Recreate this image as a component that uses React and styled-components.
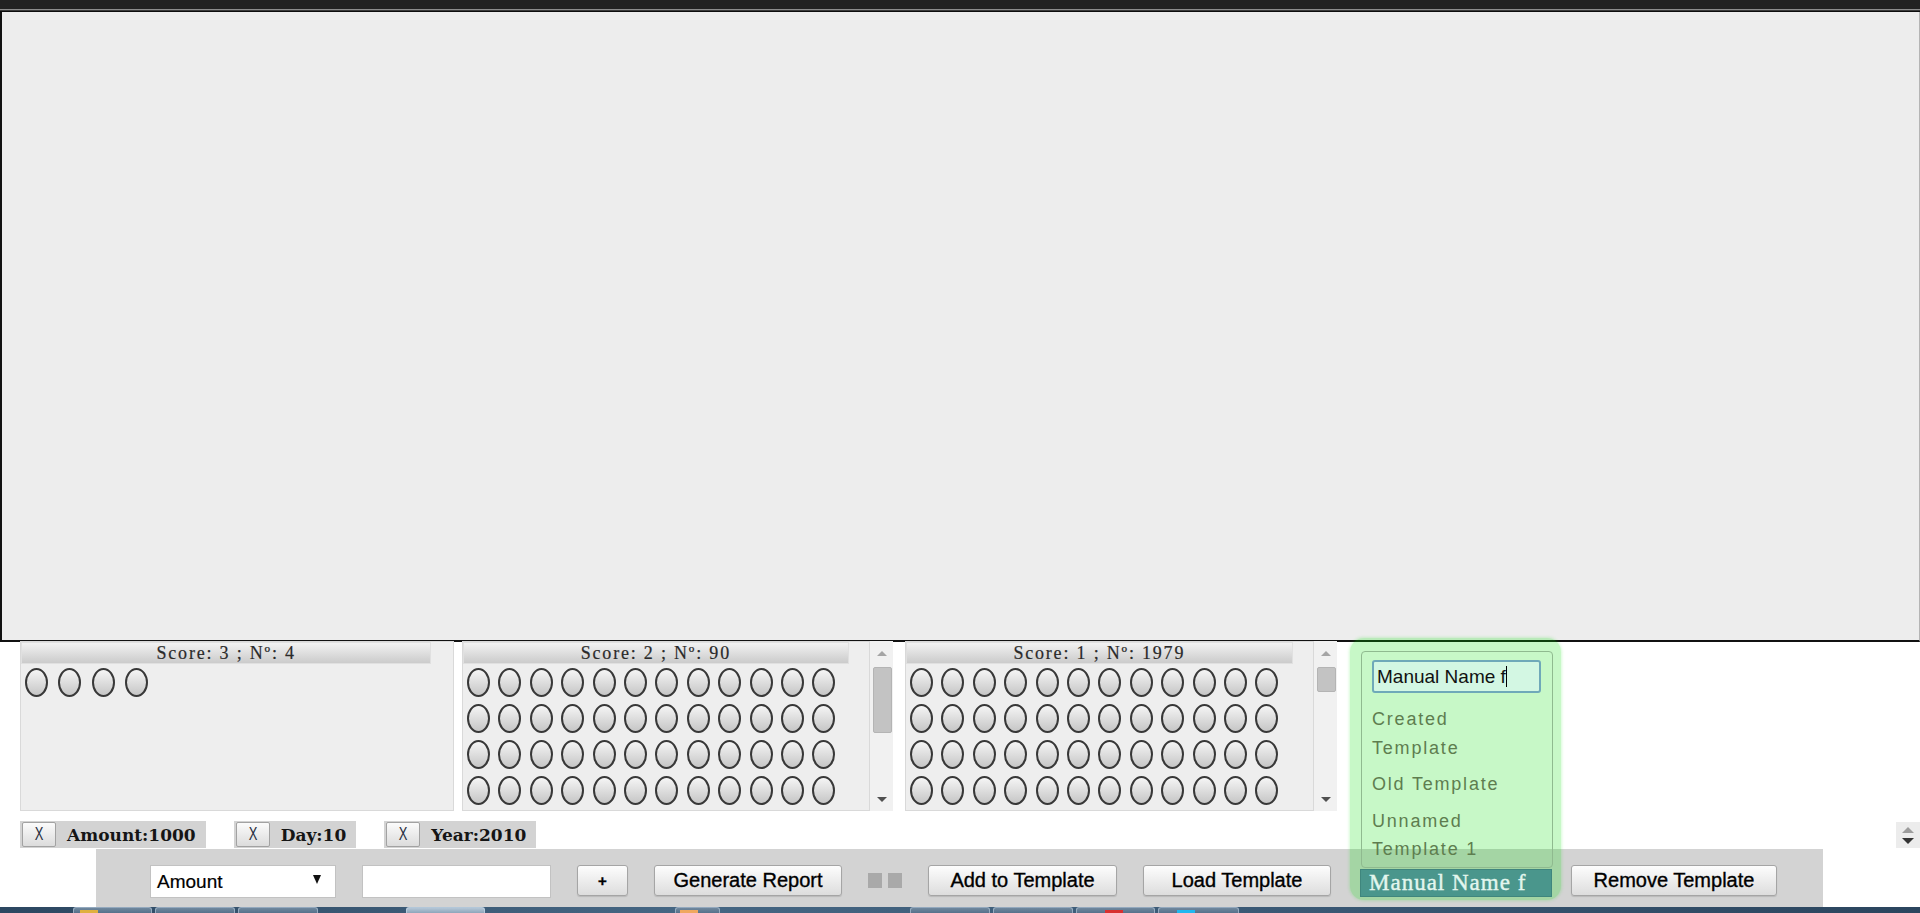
import React from 'react';
import styled, { createGlobalStyle } from 'styled-components';

const GlobalStyle = createGlobalStyle`
  html, body {
    margin: 0;
    padding: 0;
    background: #fff;
    overflow: hidden;
  }
  body {
    font-family: "Liberation Sans", Arial, sans-serif;
  }
  * {
    box-sizing: border-box;
  }
`;

const Page = styled.div`
  width: 1920px;
  height: 913px;
  display: flex;
  flex-direction: column;
  overflow: hidden;
`;

const TopStrip = styled.div`
  flex: none;
  height: 12px;
  background: linear-gradient(#222 0 9px, #8c8c8c 9px 10px, #3a3a3a 10px 11px, #0d0d0d 11px 12px);
`;

const Canvas = styled.div`
  flex: none;
  height: 630px;
  background: #ededed;
  border-left: 2px solid #111;
  border-right: 1px solid #b5b5b5;
  border-bottom: 2px solid #111;
`;

const PanelsRow = styled.div`
  flex: none;
  display: flex;
  align-items: flex-start;
  height: 170px;
  margin-top: -1px;
  padding-left: 20px;
`;

const PanelBox = styled.div`
  display: flex;
  width: ${p => p.$width}px;
  height: 170px;
  margin-right: ${p => p.$gap}px;
`;

const PanelBody = styled.div`
  flex: 1;
  height: 100%;
  background: #eee;
  border: 1px solid #d9d9d9;
  overflow: hidden;
`;

const PanelHeader = styled.div`
  width: 95%;
  height: 22px;
  background: linear-gradient(#f2f2f2, #cbcbcb);
  border: 1px solid #e0e0e0;
  text-align: center;
  font: 18px/20px "Liberation Serif", "Times New Roman", serif;
  letter-spacing: 1.8px;
  color: #2a2a2a;
  -webkit-text-stroke: 0.2px #2a2a2a;
`;

const Ovals = styled.div`
  width: 95%;
  display: flex;
  flex-wrap: wrap;
  column-gap: ${p => p.$gap}px;
  row-gap: 7px;
  padding: 4px 0 0 4px;
`;

const Oval = styled.span`
  flex: none;
  width: 23px;
  height: 29px;
  border-radius: 50%;
  border: 2px solid #383838;
  background: linear-gradient(#f5f5f5, #c6c6c6);
`;

const ScrollBar = styled.div`
  flex: none;
  width: 23px;
  height: 100%;
  background: #f1f1f1;
  display: flex;
  flex-direction: column;
`;

const ScrollArrow = styled.div`
  height: 24px;
  display: flex;
  align-items: center;
  justify-content: center;
  &::before {
    content: "";
    border-left: 5px solid transparent;
    border-right: 5px solid transparent;
    ${p => p.$up
      ? 'border-bottom: 5px solid #a5a5a5;'
      : 'border-top: 5px solid #505050;'}
  }
`;

const ScrollTrack = styled.div`
  flex: 1;
  padding: 2px 1px 0 3px;
`;

const Thumb = styled.div`
  width: 19px;
  background: #c3c3c3;
  border: 1px solid #b4b4b4;
  border-radius: 2px;
`;

const TagsRow = styled.div`
  flex: none;
  display: flex;
  align-items: flex-start;
  gap: 28px;
  height: 27px;
  margin-top: 10px;
  padding-left: 20px;
`;

const Tag = styled.div`
  display: flex;
  align-items: center;
  gap: 11px;
  height: 27px;
  padding: 0 10px 0 2px;
  background: #d3d3d3;
  font: bold 17px "DejaVu Serif", "Liberation Serif", serif;
  color: #151515;
`;

const RemoveX = styled.button`
  width: 34px;
  height: 25px;
  padding: 0;
  border: 1px solid #a2a2a2;
  border-radius: 2px;
  background: linear-gradient(#fbfbfb, #dcdcdc);
  font: 18px/23px "Liberation Sans", Arial, sans-serif;
  color: #262d40;
  span {
    display: inline-block;
    transform: scaleX(0.72);
  }
`;

const Spinner = styled.div`
  margin-left: auto;
  width: 24px;
  height: 26px;
  margin-top: 1px;
  background: #ececec;
  display: flex;
  flex-direction: column;
  align-items: center;
  justify-content: center;
  gap: 5px;
`;

const Tri = styled.span`
  width: 0;
  height: 0;
  border-left: 6px solid transparent;
  border-right: 6px solid transparent;
  ${p => p.$up
    ? 'border-bottom: 6px solid #9c9c9c;'
    : 'border-top: 6px solid #333;'}
`;

const Toolbar = styled.div`
  flex: none;
  display: flex;
  align-items: flex-start;
  gap: 26px;
  width: 1727px;
  height: 58px;
  margin: 1px 0 0 96px;
  padding: 16px 0 0 54px;
  background: #d3d3d3;
`;

const SelectBox = styled.div`
  display: flex;
  align-items: center;
  justify-content: space-between;
  width: 186px;
  height: 33px;
  padding: 0 14px 0 6px;
  background: #fff;
  border: 1px solid #c2c2c2;
  font: 19px "Liberation Sans", Arial, sans-serif;
  color: #000;
  -webkit-text-stroke: 0.2px #000;
  &::after {
    content: "";
    border-left: 4px solid transparent;
    border-right: 4px solid transparent;
    border-top: 9px solid #111;
    margin-top: -4px;
  }
`;

const TextInput = styled.input`
  width: 189px;
  height: 33px;
  background: #fff;
  border: 1px solid #c2c2c2;
  outline: none;
`;

const Button = styled.button`
  width: ${p => p.$w}px;
  height: 31px;
  padding: 0;
  background: linear-gradient(#fdfdfd, #dddddd);
  border: 1px solid #a5a5a5;
  border-radius: 3px;
  box-shadow: 0 1px 1px rgba(0, 0, 0, 0.12);
  font: ${p => (p.$small ? 'bold 15px' : '20px')} "Liberation Sans", Arial, sans-serif;
  color: #000;
  -webkit-text-stroke: 0.35px #000;
`;

const Marks = styled.div`
  display: flex;
  gap: 6px;
  margin-top: 8px;
`;

const Mark = styled.span`
  width: 14px;
  height: 15px;
  background: #a9a9a9;
`;

const Picker = styled.div`
  position: relative;
  width: 192px;
  height: 28px;
  margin: 4px -7px 0 3px;
`;

const Glow = styled.div`
  position: absolute;
  top: -231px;
  left: -10px;
  right: -9px;
  bottom: -3px;
  border-radius: 14px;
  background: rgba(0, 225, 0, 0.22);
  box-shadow: 0 0 3px 1px rgba(0, 225, 0, 0.16);
`;

const ListBox = styled.div`
  position: absolute;
  left: 1px;
  bottom: calc(100% + 1px);
  width: 192px;
  height: 217px;
  padding: 8px 0 0 10px;
  border: 1px solid #8fba8f;
  border-radius: 4px;
`;

const NameField = styled.div`
  display: flex;
  align-items: center;
  width: 169px;
  height: 33px;
  padding: 0 3px;
  background: #d3f7e3;
  border: 2px solid #6fa9b9;
  border-radius: 3px;
  font: 19px "Liberation Sans", Arial, sans-serif;
  color: #111;
  white-space: pre;
`;

const Caret = styled.span`
  width: 1px;
  height: 21px;
  background: #000;
`;

const Options = styled.div`
  margin-top: 12px;
  display: flex;
  flex-direction: column;
  gap: 8px;
`;

const Option = styled.div`
  width: 150px;
  font: 18px/28.5px "Liberation Sans", Arial, sans-serif;
  letter-spacing: 1.8px;
  color: #5e7d4f;
`;

const SelectedValue = styled.div`
  position: relative;
  height: 28px;
  padding-left: 8px;
  background: #4a968c;
  border: 1px solid #3f867d;
  font: 23px/26px "Liberation Serif", "Times New Roman", serif;
  letter-spacing: 1px;
  color: #e2f6ee;
  -webkit-text-stroke: 0.4px #e2f6ee;
  white-space: nowrap;
  overflow: hidden;
`;

const Taskbar = styled.div`
  flex: none;
  display: flex;
  align-items: stretch;
  gap: 3px;
  height: 6px;
  padding-left: 73px;
  background: linear-gradient(90deg, #2c4761, #456683 35%, #395773 70%, #2b455e);
`;

const TaskItem = styled.div`
  position: relative;
  width: ${p => p.$w}px;
  margin-left: ${p => p.$ml || 0}px;
  background: ${p => (p.$active
    ? 'linear-gradient(#b4c6d6, #8ea6bb)'
    : 'linear-gradient(#70889e, #56718b)')};
  border: 1px solid rgba(220, 235, 250, 0.45);
  border-bottom: none;
  border-radius: 3px 3px 0 0;
  &::after {
    content: "";
    position: absolute;
    left: ${p => p.$iconAt || 22}px;
    top: 2px;
    width: 18px;
    height: 4px;
    background: ${p => p.$icon || 'transparent'};
  }
`;

const ScorePanel = ({ score, count, width, gap, ovalGap, scroll }) => {
  const rows = Math.ceil(count / 12);
  const thumb = Math.max(25, Math.round((122 * 4.3) / rows));
  return (
    <PanelBox $width={width} $gap={gap}>
      <PanelBody>
        <PanelHeader>Score: {score} ; Nº: {count}</PanelHeader>
        <Ovals $gap={ovalGap}>
          {Array.from({ length: count }, (_, i) => <Oval key={i} />)}
        </Ovals>
      </PanelBody>
      {scroll && (
        <ScrollBar>
          <ScrollArrow $up />
          <ScrollTrack>
            <Thumb style={{ height: thumb }} />
          </ScrollTrack>
          <ScrollArrow />
        </ScrollBar>
      )}
    </PanelBox>
  );
};

const panels = [
  { score: 3, count: 4, width: 434, gap: 8, ovalGap: 10.3, scroll: false },
  { score: 2, count: 90, width: 431, gap: 12, ovalGap: 8.4, scroll: true },
  { score: 1, count: 1979, width: 432, gap: 0, ovalGap: 8.4, scroll: true },
];

const filters = ['Amount:1000', 'Day:10', 'Year:2010'];

const templates = ['Created Template', 'Old Template', 'Unnamed Template 1'];

const App = () => (
  <>
    <GlobalStyle />
    <Page>
      <TopStrip />
      <Canvas />
      <PanelsRow>
        {panels.map(p => <ScorePanel key={p.score} {...p} />)}
      </PanelsRow>
      <TagsRow>
        {filters.map(f => (
          <Tag key={f}>
            <RemoveX><span>X</span></RemoveX>
            {f}
          </Tag>
        ))}
        <Spinner>
          <Tri $up />
          <Tri />
        </Spinner>
      </TagsRow>
      <Toolbar>
        <SelectBox>Amount</SelectBox>
        <TextInput />
        <Button $w={51} $small>+</Button>
        <Button $w={188}>Generate Report</Button>
        <Marks>
          <Mark />
          <Mark />
        </Marks>
        <Button $w={189}>Add to Template</Button>
        <Button $w={188}>Load Template</Button>
        <Picker>
          <Glow />
          <ListBox>
            <NameField>
              Manual Name f<Caret />
            </NameField>
            <Options>
              {templates.map(t => <Option key={t}>{t}</Option>)}
            </Options>
          </ListBox>
          <SelectedValue>Manual Name f</SelectedValue>
        </Picker>
        <Button $w={206}>Remove Template</Button>
      </Toolbar>
      <Taskbar>
        <TaskItem $w={79} $icon="#e0b040" $iconAt={6} />
        <TaskItem $w={80} />
        <TaskItem $w={80} />
        <TaskItem $w={79} $ml={85} $active />
        <TaskItem $w={45} $ml={187} $icon="#f0a860" $iconAt={4} />
        <TaskItem $w={80} $ml={187} />
        <TaskItem $w={80} />
        <TaskItem $w={79} $icon="#d83030" $iconAt={28} />
        <TaskItem $w={81} $icon="#20b8f0" $iconAt={18} />
      </Taskbar>
    </Page>
  </>
);

export default App;
